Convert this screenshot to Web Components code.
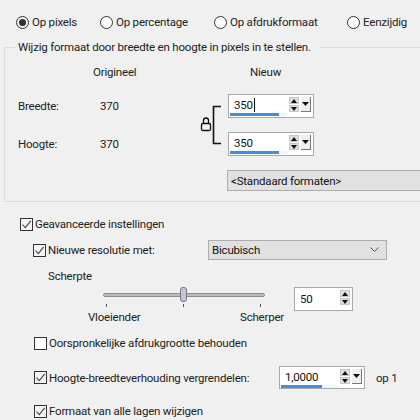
<!DOCTYPE html>
<html>
<head>
<meta charset="utf-8">
<title>Formaat wijzigen</title>
<style>
  html, body { margin: 0; height: 100%; overflow: hidden; background: #f0f0f0; }
</style>
</head>
<body>
<resize-panel></resize-panel>
<script>
class PspRadio extends HTMLElement {
  constructor() {
    super();
    this.attachShadow({ mode: 'open' });
    const dot = this.hasAttribute('checked') ? '<i></i>' : '';
    this.shadowRoot.innerHTML = `
      <style>
        :host { display: flex; align-items: center; gap: 3px; }
        b { width: 11px; height: 11px; border: 1px solid #333; border-radius: 50%; background: #fff;
            display: flex; align-items: center; justify-content: center; }
        :host([checked]) b { background: #f0f0f0; }
        i { width: 7px; height: 7px; border-radius: 50%; background: #333; }
      </style>
      <b>${dot}</b><span><slot></slot></span>
    `;
  }
}

class PspCheck extends HTMLElement {
  constructor() {
    super();
    this.attachShadow({ mode: 'open' });
    const tick = this.hasAttribute('checked')
      ? '<svg width="11" height="11" viewBox="0 0 11 11"><path d="M1.5 5.5 L4.3 8.7 L9.7 1.8" fill="none" stroke="#444" stroke-width="1.1"/></svg>'
      : '';
    this.shadowRoot.innerHTML = `
      <style>
        :host { display: flex; align-items: center; gap: 2px; white-space: nowrap; }
        b { width: 11px; height: 11px; border: 1px solid #333; background: #fff; display: block; flex: none; }
        :host([checked]) b { background: #f4f4f4; }
        svg { display: block; }
      </style>
      <b>${tick}</b><span><slot></slot></span>
    `;
  }
}

class PspSpin extends HTMLElement {
  constructor() {
    super();
    this.attachShadow({ mode: 'open' });
    const fill = this.getAttribute('fill');
    const drop = this.hasAttribute('drop');
    this.shadowRoot.innerHTML = `
      <style>
        :host { display: flex; box-sizing: border-box; width: var(--w, 86px); height: var(--h, 24px);
                border: 1px solid #a8a8a8; background: #fff; padding: 2px 2px 2px 1px; gap: 2px; }
        .field { flex: 1; display: flex; flex-direction: column; min-width: 0; }
        .value { flex: 1; display: flex; align-items: center; padding-left: 4px; color: #111; }
        .caret { width: 1px; height: 14px; background: #111; margin-left: 1px; }
        .track { height: 3px; background: #f0f5fa; }
        .bar { height: 3px; background: #3f8fe0; width: ${fill || 0}px; }
        .btns { width: 10px; display: flex; flex-direction: column; gap: 1px; }
        .btns span { background: #dedede; border: 1px solid #c8c8c8;
                     display: flex; align-items: center; justify-content: center; height: 5px; width: 8px; }
        .btns svg, .drop svg { display: block; }
        .drop { width: 9px; height: 14px; background: #efefef; border-right: 1px solid #777; border-bottom: 1px solid #777;
                display: flex; align-items: center; justify-content: center; }
      </style>
      <div class="field">
        <div class="value"><slot></slot>${this.hasAttribute('caret') ? '<span class="caret"></span>' : ''}</div>
        ${fill ? '<div class="track"><div class="bar"></div></div>' : ''}
      </div>
      <div class="btns">
        <span><svg width="6" height="4"><path d="M3 0 L6 4 L0 4 Z" fill="#111"/></svg></span>
        <span><svg width="6" height="4"><path d="M0 0 L6 0 L3 4 Z" fill="#111"/></svg></span>
      </div>
      ${drop ? '<div class="drop"><svg width="7" height="4"><path d="M0 0 L7 0 L3.5 4 Z" fill="#111"/></svg></div>' : ''}
    `;
  }
}

class PspSelect extends HTMLElement {
  constructor() {
    super();
    this.attachShadow({ mode: 'open' });
    const chevron = this.hasAttribute('chevron')
      ? '<svg width="9" height="6" viewBox="0 0 9 6"><path d="M0.5 0.5 L4.5 4.5 L8.5 0.5" fill="none" stroke="#555"/></svg>'
      : '';
    this.shadowRoot.innerHTML = `
      <style>
        :host { display: flex; box-sizing: border-box; align-items: center; justify-content: space-between;
                background: #e1e1e1; border: 1px solid #adadad; padding: 0 3px; color: #111; }
        svg { display: block; margin-right: 4px; }
      </style>
      <span><slot></slot></span>${chevron}
    `;
  }
}

class PspSlider extends HTMLElement {
  constructor() {
    super();
    this.attachShadow({ mode: 'open' });
    this.shadowRoot.innerHTML = `
      <style>
        :host { display: block; width: 200px; height: 42px; position: relative; }
        .groove { position: absolute; left: 15px; top: 6px; width: 162px; height: 4px; box-sizing: border-box;
                  background: #bdbdbd; border: 1px solid #8f8f8f; border-radius: 2px; }
        .thumb { position: absolute; left: 92px; top: 0; width: 7px; height: 15px; box-sizing: border-box;
                 background: #c3c6d6; border: 1px solid #77777f; border-radius: 3px; }
        .tick { position: absolute; top: 17px; width: 1px; height: 3px; background: #555; }
        .lbl { position: absolute; top: 22px; line-height: 16px; }
      </style>
      <div class="groove"></div>
      <div class="thumb"></div>
      <i class="tick" style="left:18px"></i>
      <i class="tick" style="left:95px"></i>
      <i class="tick" style="left:172px"></i>
      <span class="lbl" style="left:0">Vloeiender</span>
      <span class="lbl" style="left:152px">Scherper</span>
    `;
  }
}

class SizeGroup extends HTMLElement {
  constructor() {
    super();
    this.attachShadow({ mode: 'open' });
    this.shadowRoot.innerHTML = `
      <style>
        :host { display: block; margin: 0 -20px 0 4px; }
        fieldset { margin: 0; padding: 0; border: 1px solid #dcdcdc; height: 163px; box-sizing: border-box; }
        legend { margin-left: 10px; padding: 0 8px 0 3px; line-height: 16px; }
        .grid { display: grid; grid-template-columns: 75px 107px 28px 86px; margin: 9px 0 0 13px;
                grid-template-rows: 16px 24px 24px 21px; row-gap: 14px; align-items: center; }
        .grid > svg { grid-column: 3; grid-row: 2 / 4; display: block; }
        .nieuw { padding-left: 22px; }
        .num { padding-left: 7px; }
        psp-select { grid-column: 4 / 5; height: 21px; width: 210px; margin-left: -1px; }
      </style>
      <fieldset>
        <legend>Wijzig formaat door breedte en hoogte in pixels in te stellen.</legend>
        <div class="grid">
          <span></span><span>Origineel</span><span></span><span class="nieuw">Nieuw</span>
          <span>Breedte:</span><span class="num">370</span>
          <svg width="28" height="62" viewBox="0 0 28 62">
            <path d="M21 12.5 H13.5 V49.5 H21" fill="none" stroke="#111" stroke-width="1.6"/>
            <rect x="1.5" y="29.5" width="9" height="7" rx="1.5" fill="#f4f4f4" stroke="#111" stroke-width="1.3"/>
            <path d="M3.5 29 V26.5 a2.5 2.5 0 0 1 5 0 V29" fill="none" stroke="#111" stroke-width="1.3"/>
          </svg>
          <psp-spin fill="49" drop caret>350</psp-spin>
          <span>Hoogte:</span><span class="num">370</span>
          <psp-spin fill="49" drop>350</psp-spin>
          <span></span><span></span><span></span>
          <psp-select>&lt;Standaard formaten&gt;</psp-select>
        </div>
      </fieldset>
    `;
  }
}

class ResizePanel extends HTMLElement {
  constructor() {
    super();
    this.attachShadow({ mode: 'open' });
    this.shadowRoot.innerHTML = `
      <style>
        :host { display: block; width: 420px; height: 420px; overflow: hidden; background: #f0f0f0;
                font: 11.5px/16px Roboto, "Noto Sans", sans-serif; letter-spacing: -0.2px; color: #222; }
        .modes { display: grid; grid-template-columns: 84px 114px 133px auto; height: 39px; padding: 14px 0 0 16px; box-sizing: border-box; align-items: start; }
        .advanced { padding-top: 14px; height: 219px; box-sizing: border-box; }
        .row { display: flex; align-items: center; }
        .r1 { height: 16px; margin-left: 20px; }
        .r2 { height: 20px; margin: 8px 0 0 33px; }
        .r2 psp-check { width: 175px; }
        .r2 psp-select { width: 179px; height: 20px; }
        .sharp { margin: 8px 0 0 48px; line-height: 16px; }
        .slide { display: flex; margin: 3px 0 0 88px; align-items: flex-start; }
        .slide psp-spin { --w: 59px; --h: 24px; margin: 0 0 0 6px; }
        .r3 { height: 16px; margin: 6px 0 0 34px; }
        .r4 { height: 23px; margin: 15px 0 0 34px; }
        .r4 psp-spin { --h: 23px; }
        .r4 .op { margin-left: 11px; }
        .r4 psp-check { width: 245px; }
        .r5 { height: 16px; margin: 14px 0 0 34px; }
      </style>
      <div class="modes">
        <psp-radio checked>Op pixels</psp-radio>
        <psp-radio>Op percentage</psp-radio>
        <psp-radio>Op afdrukformaat</psp-radio>
        <psp-radio>Eenzijdig</psp-radio>
      </div>
      <size-group></size-group>
      <div class="advanced">
        <div class="row r1"><psp-check checked>Geavanceerde instellingen</psp-check></div>
        <div class="row r2"><psp-check checked>Nieuwe resolutie met:</psp-check><psp-select chevron>Bicubisch</psp-select></div>
        <div class="sharp">Scherpte</div>
        <div class="slide"><psp-slider></psp-slider><psp-spin>50</psp-spin></div>
        <div class="row r3"><psp-check>Oorspronkelijke afdrukgrootte behouden</psp-check></div>
        <div class="row r4"><psp-check checked>Hoogte-breedteverhouding vergrendelen:</psp-check><psp-spin fill="41" drop>1,0000</psp-spin><span class="op">op 1</span></div>
        <div class="row r5"><psp-check checked>Formaat van alle lagen wijzigen</psp-check></div>
      </div>
    `;
  }
}

customElements.define('psp-radio', PspRadio);
customElements.define('psp-check', PspCheck);
customElements.define('psp-spin', PspSpin);
customElements.define('psp-select', PspSelect);
customElements.define('psp-slider', PspSlider);
customElements.define('size-group', SizeGroup);
customElements.define('resize-panel', ResizePanel);
</script>
</body>
</html>
